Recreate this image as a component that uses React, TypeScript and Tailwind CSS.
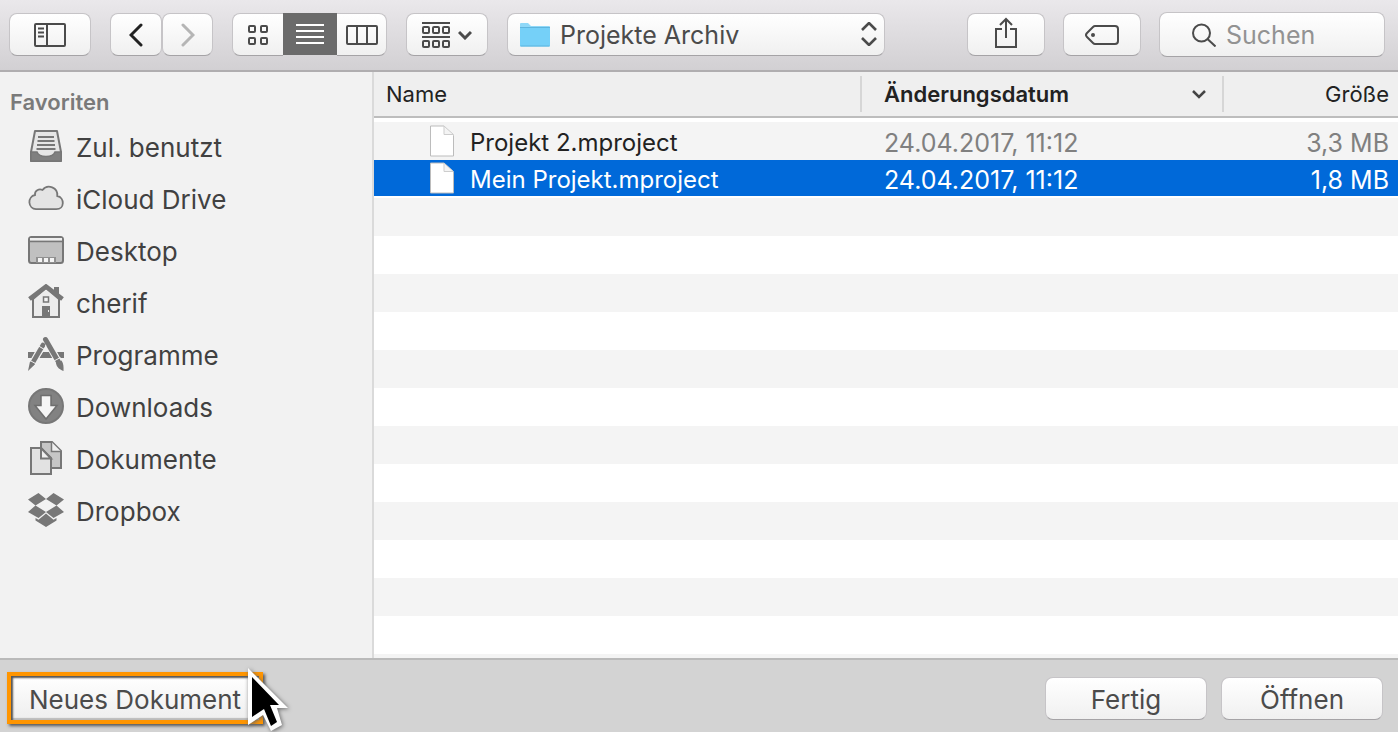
import { ReactNode } from "react";

const FAVORITES = [
  { label: "Zul. benutzt", icon: <RecentsIcon /> },
  { label: "iCloud Drive", icon: <CloudIcon /> },
  { label: "Desktop", icon: <DesktopIcon /> },
  { label: "cherif", icon: <HomeIcon /> },
  { label: "Programme", icon: <AppsIcon /> },
  { label: "Downloads", icon: <DownloadsIcon /> },
  { label: "Dokumente", icon: <DocumentsIcon /> },
  { label: "Dropbox", icon: <DropboxIcon /> },
];

const FILES = [
  { name: "Projekt 2.mproject", date: "24.04.2017, 11:12", size: "3,3 MB", selected: false },
  { name: "Mein Projekt.mproject", date: "24.04.2017, 11:12", size: "1,8 MB", selected: true },
];

const CONTROL =
  "flex items-center justify-center border border-[#c6c4c7] border-b-[#a5a3a6] bg-linear-to-b from-white to-[#f0f0f0] text-[#4b4b4b]";

function RecentsIcon() {
  return (
    <svg width="36" height="36" viewBox="0 0 36 36" fill="none" stroke="#777">
      <path d="M7 3h22l4 21v9H3v-9z" fill="#e6e6e6" strokeWidth="2" strokeLinejoin="round" />
      <path d="M3 24h6c2 6 16 6 18 0h6v9H3z" fill="#808080" strokeWidth="1.5" />
      <path d="M10 9h16M9.5 13h17M9 17h18M8.500 21h19" strokeWidth="2" />
    </svg>
  );
}

function CloudIcon() {
  return (
    <svg width="36" height="36" viewBox="0 0 36 36">
      <path
        d="M8 29.2a7.200 7.200 0 0 1-1-14.200C6.500 10.500 11 8.500 14.500 10a8.300 8.300 0 0 1 14.800 6c7.500 1.500 7.500 13.200-1 13.200z"
        fill="#e4e4e4"
        stroke="#777"
        strokeWidth="1.8"
      />
    </svg>
  );
}

function DesktopIcon() {
  return (
    <svg width="36" height="36" viewBox="0 0 36 36">
      <rect x="1" y="5" width="34" height="26" rx="2.5" fill="#c0c0c0" stroke="#777" strokeWidth="2" />
      <path d="M2 6h32v2.500H2z" fill="#eee" />
      <path d="M1 9.500h34" stroke="#777" strokeWidth="1.5" />
      <path d="M8 25h20v6H8z" fill="#909090" />
      <path d="M10 26h4v4h-4zM16 26h4v4h-4zM22 26h4v4h-4z" fill="#f4f4f4" />
    </svg>
  );
}

function HomeIcon() {
  return (
    <svg width="36" height="36" viewBox="0 0 36 36">
      <path d="M5 15v18h26V15L18 4z" fill="#ececec" stroke="#777" strokeWidth="2" />
      <path d="M26 3h5v10l-5-5z" fill="#777" />
      <path d="M1.500 15 18 2.500 34.500 15" fill="none" stroke="#777" strokeWidth="4.5" />
      <path d="M15.500 13h5v5h-5z" fill="#f4f4f4" stroke="#777" strokeWidth="1.5" />
      <path d="M14 22h8v11h-8z" fill="#777" />
      <path d="M20 26h1v2h-1z" fill="#eee" />
    </svg>
  );
}

function AppsIcon() {
  return (
    <svg width="36" height="36" viewBox="0 0 36 36">
      <path d="M0 16h7l-3 6H0zM11 22l4-6h7l3 6zM29 16h7v6h-4z" fill="#777" />
      <path d="m17.500 3 13 23" stroke="#f2f2f2" strokeWidth="7" />
      <path d="m17.500 3.500 13 22.500" stroke="#777" strokeWidth="5" strokeLinecap="round" />
      <path d="M15.500 8 4 28" stroke="#f2f2f2" strokeWidth="7" />
      <path d="M15 9 4.500 27" stroke="#777" strokeWidth="4.6" strokeLinecap="round" />
      <path d="m2 25.500 5 2.800L0 35zM28 27l5.500-2.500c2 3 2.300 6 2 10.500-3.500-1.500-7-3.500-7.500-8z" fill="#777" />
      <path d="m10.500 10 6 3.500M26 25l6.500-3.500M2 24.500l6 3.300" stroke="#f2f2f2" strokeWidth="1" />
    </svg>
  );
}

function DownloadsIcon() {
  return (
    <svg width="36" height="36" viewBox="0 0 36 36">
      <circle cx="18" cy="18" r="17" fill="#828282" stroke="#777" strokeWidth="2" />
      <path d="M13 7.500h10v10h6L18 31 7 17.500h6z" fill="#f5f5f5" stroke="#6e6e6e" strokeWidth="1.5" />
    </svg>
  );
}

function DocumentsIcon() {
  return (
    <svg width="36" height="36" viewBox="0 0 36 36" stroke="#777" strokeWidth="2">
      <path d="M13 2h11l9 9v17H13z" fill="#c6c6c6" />
      <path d="M23.500 2v9.500H33" fill="#f0f0f0" strokeWidth="1.5" />
      <path d="M3 8h10l10 10v16H3z" fill="#e2e2e2" />
      <path d="M13 8v10.500h10z" fill="#f0f0f0" />
    </svg>
  );
}

function DropboxIcon() {
  return (
    <svg width="36" height="36" viewBox="0 0 36 36" fill="#777">
      <path d="M10.500 1 18 7 7.500 13.500 0 7.500zM25.500 1 18 7l10.500 6.500 7.500-6zM7.500 13.500 18 20l-7.500 6L0 20zM28.500 13.500 18 20l7.500 6 10.500-6z" />
      <path d="m18 21.500 7.500 6.200 3-1.700v2.500L18 35 7.500 28.500V26l3 1.700z" />
    </svg>
  );
}

function FileIcon() {
  return (
    <svg className="shrink-0" width="24" height="32" viewBox="0 0 24 32">
      <path d="M.5 1H14l9.500 9.500V31H.5z" fill="#fff" stroke="#bcbcbc" strokeWidth="1" />
      <path d="M14 1v8.500h9.500z" fill="#f4f4f4" stroke="#cdcdcd" strokeWidth="1" />
    </svg>
  );
}

function ToolbarButton({ label, className, children }: { label: string; className: string; children: ReactNode }) {
  return (
    <button type="button" aria-label={label} className={`${CONTROL} h-[43px] shrink-0 ${className}`}>
      {children}
    </button>
  );
}

function Toolbar() {
  return (
    <header className="flex h-[72px] items-start gap-[19px] border-b-2 border-[#b0aeb0] bg-linear-to-b from-[#eae8eb] to-[#d2d0d3] pt-[13px] pr-[13px] pl-[9px]">
      <ToolbarButton label="Seitenleiste" className="w-[82px] rounded-lg">
        <svg width="32" height="24" viewBox="0 0 32 24" fill="none" stroke="currentColor" strokeWidth="2">
          <rect x="1" y="1" width="30" height="22" rx="1" />
          <path d="M13 1v22M4 5.500h6M4 9.500h6M4 13.500h6" />
        </svg>
      </ToolbarButton>

      <div className="flex shrink-0">
        <ToolbarButton label="Zurück" className="w-[52px] rounded-lg">
          <svg width="14" height="24" viewBox="0 0 14 24" fill="none" stroke="#222" strokeWidth="3" strokeLinecap="round">
            <path d="M12 2 2 12l10 10" />
          </svg>
        </ToolbarButton>
        <ToolbarButton label="Vorwärts" className="w-[51px] rounded-lg">
          <svg width="14" height="24" viewBox="0 0 14 24" fill="none" stroke="#b5b5b5" strokeWidth="3" strokeLinecap="round">
            <path d="m2 2 10 10L2 22" />
          </svg>
        </ToolbarButton>
      </div>

      <div className="flex shrink-0">
        <ToolbarButton label="Symbole" className="w-[51px] rounded-l-lg border-r-0">
          <svg width="20" height="20" viewBox="0 0 20 20" fill="none" stroke="currentColor" strokeWidth="2">
            <rect x="1" y="1" width="6" height="6" rx="1" />
            <rect x="13" y="1" width="6" height="6" rx="1" />
            <rect x="1" y="13" width="6" height="6" rx="1" />
            <rect x="13" y="13" width="6" height="6" rx="1" />
          </svg>
        </ToolbarButton>
        <button
          type="button"
          aria-label="Liste"
          aria-pressed="true"
          className="flex h-[42px] w-[54px] items-center justify-center bg-[#6b6b6b]"
        >
          <svg width="28" height="20" viewBox="0 0 28 20" stroke="#fff" strokeWidth="2">
            <path d="M0 1h28M0 7h28M0 13h28M0 19h28" />
          </svg>
        </button>
        <ToolbarButton label="Spalten" className="w-[50px] rounded-r-lg border-l-0">
          <svg width="32" height="20" viewBox="0 0 32 20" fill="none" stroke="currentColor" strokeWidth="2">
            <rect x="1" y="1" width="30" height="18" rx="1" />
            <path d="M11 1v18M21 1v18" />
          </svg>
        </ToolbarButton>
      </div>

      <ToolbarButton label="Gruppieren" className="w-[82px] gap-2 rounded-lg">
        <svg width="28" height="26" viewBox="0 0 28 26" fill="none" stroke="currentColor" strokeWidth="2">
          <path d="M0 1h28M0 15h28" />
          <rect x="1" y="5" width="6" height="6" rx="1" />
          <rect x="11" y="5" width="6" height="6" rx="1" />
          <rect x="21" y="5" width="6" height="6" rx="1" />
          <rect x="1" y="19" width="6" height="6" rx="1" />
          <rect x="11" y="19" width="6" height="6" rx="1" />
          <rect x="21" y="19" width="6" height="6" rx="1" />
        </svg>
        <svg width="14" height="10" viewBox="0 0 14 10" fill="none" stroke="currentColor" strokeWidth="3">
          <path d="m1 2 6 6 6-6" />
        </svg>
      </ToolbarButton>

      <div className="relative mr-[63px] flex-1">
        <select
          aria-label="Ordner"
          className="block h-[43px] w-full appearance-none rounded-lg border border-[#c6c4c7] border-b-[#a5a3a6] bg-linear-to-b from-white to-[#f0f0f0] pt-0.5 pr-10 pl-[52px] text-[25px] text-[#4b4b4b]"
        >
          <option>Projekte Archiv</option>
        </select>
        <svg className="pointer-events-none absolute top-[9px] left-3" width="32" height="26" viewBox="0 0 32 26">
          <path d="M1 2q0-1 1-1h7l3 3h18q1 0 1 1v19H1z" fill="#8fd8f8" />
          <path d="M1 6h30v17.500q0 1-1 1H2q-1 0-1-1z" fill="#75d0f8" />
          <path d="M1 5.500h30M1.500 24h29" stroke="#5fb5de" strokeWidth="1" />
        </svg>
        <svg
          className="pointer-events-none absolute top-[9px] right-2"
          width="16"
          height="24"
          viewBox="0 0 16 24"
          fill="none"
          stroke="#4b4b4b"
          strokeWidth="2.6"
        >
          <path d="m1 8 7-7 7 7M1 16l7 7 7-7" />
        </svg>
      </div>

      <div className="flex shrink-0 gap-[18px]">
        <ToolbarButton label="Teilen" className="w-[78px] rounded-lg">
          <svg className="mb-1" width="24" height="32" viewBox="0 0 24 32" fill="none" stroke="currentColor" strokeWidth="2">
            <path d="M8 12H2v18h20V12h-6M12 21V2M6 8l6-6 6 6" />
          </svg>
        </ToolbarButton>
        <ToolbarButton label="Tags" className="w-[78px] rounded-lg">
          <svg width="34" height="20" viewBox="0 0 34 20" fill="none" stroke="currentColor" strokeWidth="2">
            <path d="M10 1h20q3 0 3 3v12q0 3-3 3H10q-1 0-2-1l-6-6q-2-2 0-4l6-6q1-1 2-1z" />
            <circle cx="8" cy="10" r="2" fill="currentColor" stroke="none" />
          </svg>
        </ToolbarButton>
        <label className="-mt-px flex h-[45px] w-[226px] items-center gap-[10px] rounded-lg border border-[#c6c4c7] border-b-[#a5a3a6] bg-linear-to-b from-white to-[#f0f0f0] pl-8">
          <svg className="shrink-0" width="24" height="24" viewBox="0 0 24 24" fill="none" stroke="#4b4b4b" strokeWidth="2">
            <circle cx="9.5" cy="10" r="8.500" />
            <path d="m15.500 16 8 7.500" />
          </svg>
          <input
            type="search"
            aria-label="Suchen"
            placeholder="Suchen"
            className="w-full min-w-0 bg-transparent pt-0.5 text-[25px] outline-none placeholder:text-[#929292]"
          />
        </label>
      </div>
    </header>
  );
}

function Sidebar() {
  return (
    <nav className="w-[374px] shrink-0 border-r-2 border-[#dadada] bg-[#f2f2f2] pt-4">
      <h2 className="pl-[10px] text-[22px] leading-7 font-semibold text-[#7a7a7a]">Favoriten</h2>
      <ul className="pt-1">
        {FAVORITES.map((item) => (
          <li key={item.label}>
            <a href="#" className="flex h-[52px] items-center gap-3 pl-7 text-[26px] text-[#414141]">
              {item.icon}
              <span className="pt-[3px]">{item.label}</span>
            </a>
          </li>
        ))}
      </ul>
    </nav>
  );
}

function FileTable() {
  return (
    <main className="flex min-w-0 flex-1 flex-col bg-white">
      <table className="w-full table-fixed border-separate border-spacing-0 text-[25px] leading-8 text-[#222]">
        <thead>
          <tr className="h-[46px] bg-[#efefef] text-left">
            <th scope="col" className="border-b-2 border-[#bdbdbd] py-0 pl-3 text-[22px] font-normal">
              Name
            </th>
            <th scope="col" aria-sort="descending" className="w-[364px] border-b-2 border-[#bdbdbd] p-0 text-[22px] font-semibold">
              <div className="flex h-9 items-center justify-between border-x-2 border-[#d6d6d6] pr-4 pl-[22px]">
                Änderungsdatum
                <svg width="14" height="10" viewBox="0 0 14 10" fill="none" stroke="#444" strokeWidth="2.5">
                  <path d="m1 2 6 6 6-6" />
                </svg>
              </div>
            </th>
            <th scope="col" className="w-[174px] border-b-2 border-[#bdbdbd] py-0 pr-[9px] text-right text-[22px] font-normal">
              Größe
            </th>
          </tr>
        </thead>
        <tbody>
          <tr aria-hidden="true" className="h-1">
            <td colSpan={3} className="p-0 leading-none" />
          </tr>
          {FILES.map((file) => (
            <tr
              key={file.name}
              aria-selected={file.selected}
              className={file.selected ? "h-9 bg-[#0069d9] text-white" : "h-[38px] bg-[#f4f4f4]"}
            >
              <td className="py-0 pl-14 text-[24px]">
                <div className="flex items-center gap-4">
                  <FileIcon />
                  <span className="pt-[3px]">{file.name}</span>
                </div>
              </td>
              <td className={file.selected ? "pt-[3px] pb-0 pl-6" : "pt-[3px] pb-0 pl-6 text-[#808080]"}>{file.date}</td>
              <td
                className={
                  file.selected ? "pt-[3px] pr-[9px] pb-0 text-right" : "pt-[3px] pr-[9px] pb-0 text-right text-[#808080]"
                }
              >
                {file.size}
              </td>
            </tr>
          ))}
        </tbody>
      </table>
      {/* Empty striped rows */}
      <div className="mt-0.5 flex-1 bg-[repeating-linear-gradient(to_bottom,#f4f4f4_0px,#f4f4f4_38px,#fff_38px,#fff_76px)]" />
    </main>
  );
}

function Footer() {
  return (
    <footer className="flex h-[74px] items-center gap-[14px] border-t-2 border-[#bababa] bg-[#d3d3d3] pt-1 pr-[15px] pl-[7px] text-[26px]">
      <div className="relative mr-auto border-4 border-[#ff9500] shadow-[2px_2px_3px_#555]">
        <button
          type="button"
          className="flex h-11 w-[248px] items-center bg-linear-to-b from-white to-[#eee] pt-0.5 pl-[18px] text-[#4b4b4b] shadow-[inset_2px_2px_2px_#555,inset_0_-2px_1px_#bbb]"
        >
          Neues Dokument
        </button>
        <svg className="pointer-events-none absolute -top-2 left-[236px] drop-shadow-[1px_1px_2px_#666]" width="42" height="66" viewBox="0 0 42 66">
          <path d="M1 0 41 40H30l5 17-11 6-8-16L1 57z" fill="#fff" />
          <path d="m5 9 27 28h-9l7 17-6 4-7-17L5 49z" fill="#000" />
        </svg>
      </div>
      <button type="button" className={`${CONTROL} h-[43px] w-[162px] rounded-lg pt-0.5`}>
        Fertig
      </button>
      <button type="button" className={`${CONTROL} h-[43px] w-[162px] rounded-lg pt-0.5`}>
        Öffnen
      </button>
    </footer>
  );
}

export default function App() {
  return (
    <div className="flex min-h-screen flex-col font-['Inter','Liberation_Sans',sans-serif]">
      <Toolbar />
      <div className="flex flex-1">
        <Sidebar />
        <FileTable />
      </div>
      <Footer />
    </div>
  );
}
